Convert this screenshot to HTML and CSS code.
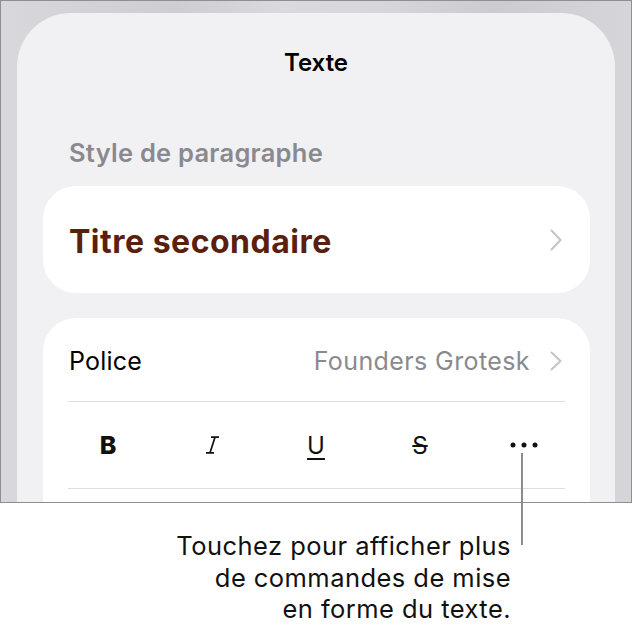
FILE: index.html
```html
<!DOCTYPE html>
<html lang="fr">
<head>
<meta charset="utf-8">
<title>Texte</title>
<link rel="stylesheet" href="styles.css">
</head>
<body>
<div class="frame">
  <div class="sheet">
    <div class="sheet-title">Texte</div>
    <div class="section-label">Style de paragraphe</div>
    <div class="card style-card">
      <span class="style-name">Titre secondaire</span>
      <svg class="chevron" width="12" height="22" viewBox="0 0 12 22"><polyline points="1.5,1.5 10.5,11 1.5,20.5" fill="none" stroke="#c4c4c8" stroke-width="2" stroke-linecap="round" stroke-linejoin="round"/></svg>
    </div>
    <div class="card font-card">
      <div class="row font-row">
        <span class="row-label">Police</span>
        <span class="row-value">Founders Grotesk</span>
        <svg class="chevron" width="12" height="20" viewBox="0 0 12 20"><polyline points="1.5,1.5 10.5,10 1.5,18.5" fill="none" stroke="#c4c4c8" stroke-width="2" stroke-linecap="round" stroke-linejoin="round"/></svg>
      </div>
      <div class="sep"></div>
      <div class="row format-row">
        <span class="fmt fmt-b">B</span>
        <span class="fmt">
          <svg width="15" height="18" viewBox="0 0 15 18"><path d="M6 1.2 H14 M1 16.8 H9 M10 1.2 L5 16.8" fill="none" stroke="#111" stroke-width="1.7" stroke-linecap="butt"/></svg>
        </span>
        <span class="fmt fmt-u">U</span>
        <span class="fmt fmt-s">S</span>
        <span class="fmt">
          <svg width="28" height="6" viewBox="0 0 28 6"><circle cx="3" cy="3" r="2.5" fill="#111"/><circle cx="14" cy="3" r="2.5" fill="#111"/><circle cx="25" cy="3" r="2.5" fill="#111"/></svg>
        </span>
      </div>
      <div class="sep"></div>
      <div class="row"></div>
    </div>
  </div>
</div>
<div class="leader"></div>
<p class="caption">Touchez pour afficher plus<br>de commandes de mise<br>en forme du texte.</p>
</body>
</html>
```
FILE: styles.css
```css
html, body {
  margin: 0;
  padding: 0;
}
body {
  width: 633px;
  height: 633px;
  background: #ffffff;
  font-family: "Inter", "Roboto", "Liberation Sans", sans-serif;
  position: relative;
  overflow: hidden;
}
.frame {
  box-sizing: border-box;
  width: 632px;
  height: 503px;
  border: 1px solid #8f8f92;
  background: linear-gradient(90deg, #d8d8dc 0%, #cdcdd2 28%, #dadade 45%, #d7d7db 60%, #cbcbd0 78%, #d6d6da 100%);
  padding: 12px 16px 0 16px;
  overflow: hidden;
}
.sheet {
  background: #f1f1f4;
  border-radius: 54px 54px 0 0;
  height: 560px;
  padding: 35px 25px 0 26px;
  box-sizing: border-box;
}
.sheet-title {
  text-align: center;
  font-size: 24px;
  font-weight: 600;
  line-height: 30px;
  color: #000;
  margin-left: -1px;
}
.section-label {
  margin-top: 60px;
  padding-left: 26px;
  font-size: 25.5px;
  font-weight: 600;
  line-height: 30px;
  color: #8a8a8e;
  letter-spacing: 0.25px;
}
.card {
  background: #ffffff;
  border-radius: 33px;
}
.style-card {
  margin-top: 18px;
  height: 107px;
  display: flex;
  align-items: center;
  padding: 0 28px 0 26px;
}
.style-name {
  flex: 1;
  font-size: 32px;
  font-weight: 700;
  color: #5a1f0d;
  letter-spacing: 0.5px;
  padding-top: 3px;
}
.chevron {
  display: block;
  flex: none;
}
.font-card {
  margin-top: 25px;
  border-radius: 33px 33px 0 0;
  height: 200px;
}
.row {
  display: flex;
  align-items: center;
}
.font-row {
  height: 83px;
  padding: 0 28px 0 26px;
  font-size: 25px;
  padding-top: 2px;
  box-sizing: border-box;
}
.row-label {
  flex: 1;
  color: #000;
  letter-spacing: 0.2px;
}
.row-value {
  color: #8a8a8e;
  margin-right: 20px;
  letter-spacing: 0.4px;
}
.sep {
  height: 1px;
  background: #dedee2;
  margin: 0 25px;
}
.format-row {
  height: 86px;
  display: grid;
  grid-template-columns: repeat(5, 104px);
  padding-left: 13px;
  align-items: center;
}
.fmt {
  display: flex;
  justify-content: center;
  align-items: center;
  font-size: 24px;
  color: #111;
  height: 30px;
}
.fmt-b {
  font-weight: 800;
  font-size: 25px;
}
.fmt-u {
  font-weight: 400;
  text-decoration: underline;
  text-decoration-thickness: 2px;
  text-underline-offset: 4px;
}
.fmt-s {
  font-weight: 400;
  text-decoration: line-through;
  text-decoration-thickness: 1.5px;
}
.leader {
  position: absolute;
  left: 521px;
  top: 453px;
  width: 2px;
  height: 92px;
  background: #8c8c8e;
}
.caption {
  margin: 27px 0 0 0;
  padding-right: 122px;
  text-align: right;
  font-size: 25.5px;
  line-height: 31.5px;
  color: #111;
  letter-spacing: 0.45px;
}
```
